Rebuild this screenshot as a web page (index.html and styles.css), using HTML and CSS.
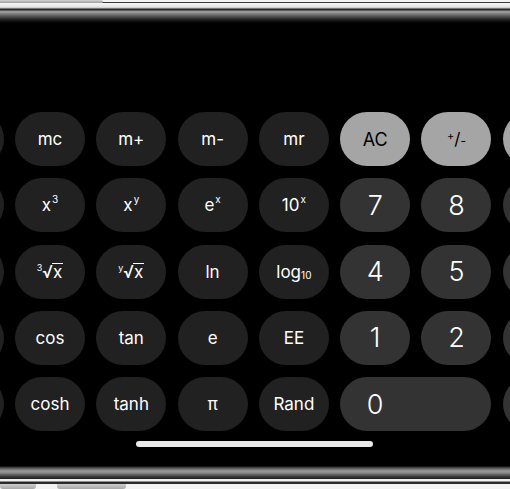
FILE: index.html
```html
<!DOCTYPE html>
<html lang="en">
<head>
<meta charset="utf-8">
<title>Calculator</title>
<link rel="stylesheet" href="styles.css">
</head>
<body>
<div class="device">
  <div class="rim-top">
    <div class="rim-edge"><span class="side-btn"></span></div>
    <div class="rim-band"></div>
  </div>
  <main class="screen">
    <div class="keypad">
      <button class="key fn" aria-label=")"></button>
      <button class="key fn">mc</button>
      <button class="key fn">m+</button>
      <button class="key fn">m-</button>
      <button class="key fn">mr</button>
      <button class="key util">AC</button>
      <button class="key util"><span class="pm"><sup>+</sup>/<sub>-</sub></span></button>
      <button class="key util" aria-label="%"></button>

      <button class="key fn" aria-label="x squared"></button>
      <button class="key fn">x<sup>3</sup></button>
      <button class="key fn">x<sup>y</sup></button>
      <button class="key fn">e<sup>x</sup></button>
      <button class="key fn">10<sup>x</sup></button>
      <button class="key num">7</button>
      <button class="key num">8</button>
      <button class="key num" aria-label="9"></button>

      <button class="key fn" aria-label="1/x"></button>
      <button class="key fn"><span class="root"><sup class="idx">3</sup><span class="rad">√</span><span class="radicand">x</span></span></button>
      <button class="key fn"><span class="root"><sup class="idx">y</sup><span class="rad">√</span><span class="radicand">x</span></span></button>
      <button class="key fn">ln</button>
      <button class="key fn">log<sub>10</sub></button>
      <button class="key num">4</button>
      <button class="key num">5</button>
      <button class="key num" aria-label="6"></button>

      <button class="key fn" aria-label="sin"></button>
      <button class="key fn">cos</button>
      <button class="key fn">tan</button>
      <button class="key fn">e</button>
      <button class="key fn">EE</button>
      <button class="key num">1</button>
      <button class="key num">2</button>
      <button class="key num" aria-label="3"></button>

      <button class="key fn" aria-label="sinh"></button>
      <button class="key fn">cosh</button>
      <button class="key fn">tanh</button>
      <button class="key fn">π</button>
      <button class="key fn">Rand</button>
      <button class="key num zero"><span class="lbl">0</span></button>
      <button class="key num" aria-label="decimal point"></button>
    </div>
    <div class="home"></div>
  </main>
  <div class="rim-bottom">
    <div class="rim-band-bottom"></div>
    <div class="rim-line"></div>
    <div class="rim-tabs">
      <span class="tab tab-a"></span>
      <span class="tab tab-b"></span>
    </div>
  </div>
</div>
</body>
</html>
```

FILE: styles.css
```css
* { box-sizing: border-box; }

html, body {
  margin: 0;
  padding: 0;
  background: #000;
}

.device {
  width: 510px;
  height: 489px;
  display: flex;
  flex-direction: column;
  overflow: hidden;
  background: #000;
  font-family: Inter, "Noto Sans", "Liberation Sans", sans-serif;
}

/* ---------- top rim ---------- */
.rim-top {
  height: 23px;
  display: flex;
  flex-direction: column;
  flex: none;
}

.rim-edge {
  height: 3px;
  display: flex;
  background: linear-gradient(to bottom, #f2f2f2 0, #f2f2f2 2px, #3a3a3a 2px, #3a3a3a 3px);
}

.side-btn {
  width: 103px;
  height: 3px;
  background: linear-gradient(to bottom, #d6d6d6, #9c9c9c);
  border-radius: 0 3px 3px 0;
}

.rim-band {
  flex: 1;
  background: linear-gradient(to bottom,
    #f6f6f6 0, #e4e4e4 4px, #bdbdbd 5px, #303030 6px, #2a2a2a 7px,
    #8e8e8e 8px, #a0a0a0 9px, #7a7a7a 11px, #5a5a5a 13px,
    #3a3a3a 15px, #1c1c1c 17px, #000 20px);
}

/* ---------- screen ---------- */
.screen {
  height: 443px;
  flex: none;
  display: flex;
  flex-direction: column;
  overflow: hidden;
}

.keypad {
  margin-top: 89px;
  margin-left: -66.3px;
  display: grid;
  grid-template-columns: repeat(8, 70px);
  grid-auto-rows: 54px;
  column-gap: 11.3px;
  row-gap: 12.25px;
}

.key {
  border: 0;
  margin: 0;
  padding: 0;
  border-radius: 27px;
  display: flex;
  align-items: center;
  justify-content: center;
  font-family: Inter, "Noto Sans", "Liberation Sans", sans-serif;
  color: #fff;
  white-space: nowrap;
}

.fn {
  background: #212121;
  font-size: 17px;
  font-weight: 400;
}

.util {
  background: #a5a5a5;
  color: #000;
  font-size: 18px;
  font-weight: 400;
}

.num {
  background: #333333;
  font-size: 27px;
  font-weight: 300;
}

.zero {
  grid-column: span 2;
  justify-content: flex-start;
}

.zero .lbl {
  width: 70px;
  text-align: center;
}

.key sup {
  font-size: 10px;
  position: relative;
  top: -6px;
  vertical-align: baseline;
  margin-left: 1px;
}

.key sub {
  font-size: 10px;
  position: relative;
  top: 3px;
  vertical-align: baseline;
}

.pm {
  font-size: 17px;
}

.pm sup {
  font-size: 11px;
  top: -5px;
  margin: 0;
}

.pm sub {
  font-size: 12px;
  top: 0;
}

.root {
  display: inline-flex;
  align-items: flex-end;
}

.root .idx {
  font-size: 9px;
  top: -9px;
  margin: 0;
}

.rad {
  font-size: 17px;
}

.radicand {
  border-top: 1.3px solid #fff;
  line-height: 17px;
  padding: 0 1px;
  margin-left: -1px;
  margin-bottom: 1px;
}

.home {
  margin-top: 10px;
  margin-left: 136px;
  width: 237px;
  height: 5.5px;
  border-radius: 3px;
  background: #e9e9e9;
}

/* ---------- bottom rim ---------- */
.rim-bottom {
  height: 23px;
  flex: none;
  display: flex;
  flex-direction: column;
}

.rim-band-bottom {
  height: 13px;
  background: linear-gradient(to bottom,
    #000 0, #2e2e2e 1px, #6e6e6e 3px, #9a9a9a 5px, #888 7px,
    #5a5a5a 9px, #333 11px, #1e1e1e 13px);
}

.rim-line {
  height: 5px;
  background: linear-gradient(to bottom, #f0f0f0 0, #f0f0f0 2px, #2a2a2a 3px, #2a2a2a 5px);
}

.rim-tabs {
  flex: 1;
  display: flex;
  background: #f2f2f2;
}

.tab {
  height: 100%;
  background: linear-gradient(to bottom, #cfcfcf, #a8a8a8);
  border-radius: 0 0 3px 3px;
}

.tab-a {
  width: 36px;
}

.tab-b {
  width: 69px;
  margin-left: 21px;
}
```
